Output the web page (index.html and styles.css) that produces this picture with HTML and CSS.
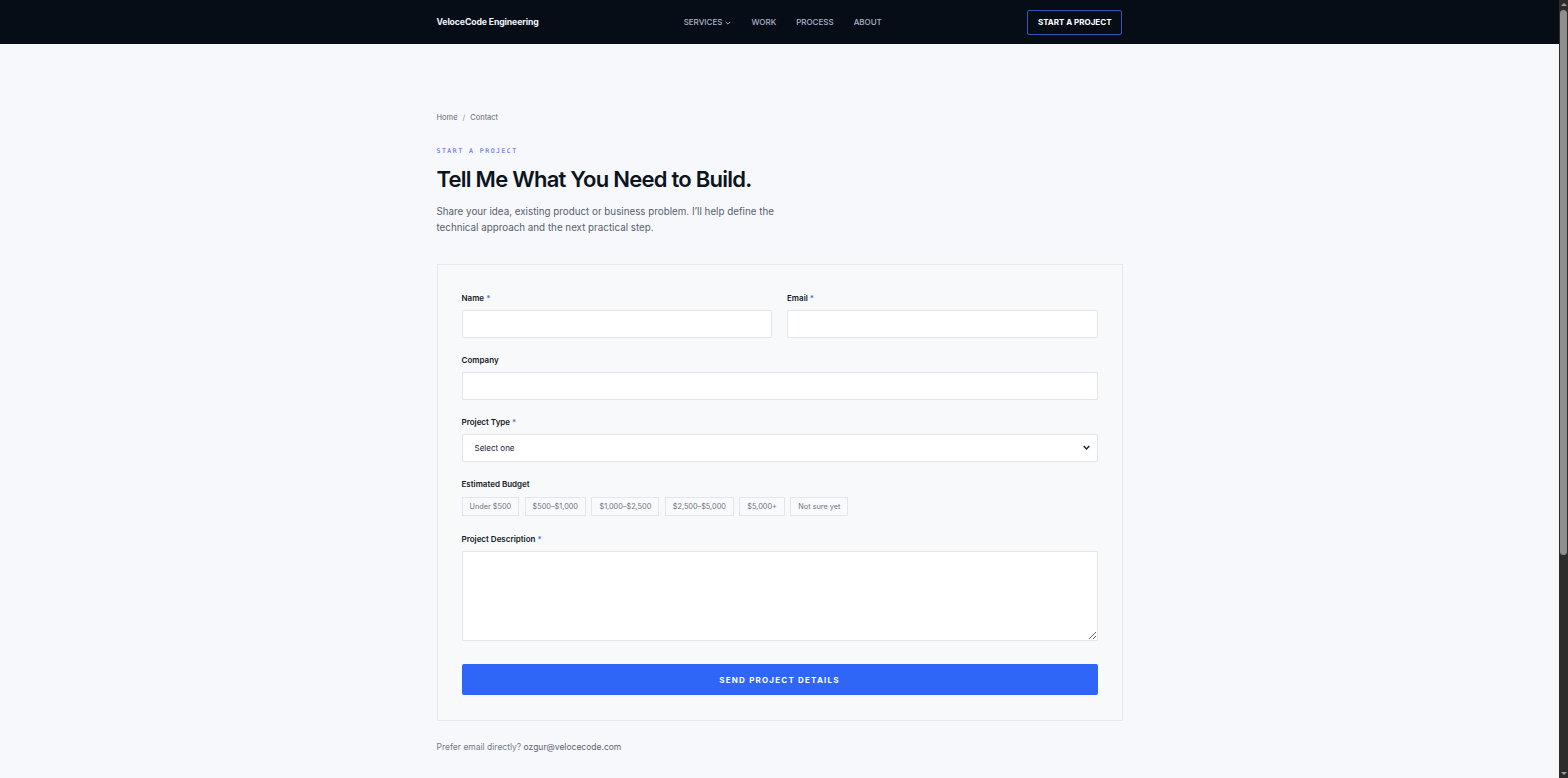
FILE: index.html
```html
<!DOCTYPE html>
<html lang="en">
<head>
<meta charset="utf-8">
<title>Contact — VeloceCode Engineering</title>
<link rel="stylesheet" href="styles.css">
</head>
<body>
<header class="topbar">
  <div class="wrap topbar-inner">
    <a class="logo" href="#">VeloceCode Engineering</a>
    <nav class="nav">
      <a href="#" class="nav-link">SERVICES
        <svg class="chev" viewBox="0 0 10 6" width="6" height="4"><path d="M1 1l4 4 4-4" fill="none" stroke="currentColor" stroke-width="1.6"/></svg>
      </a>
      <a href="#" class="nav-link">WORK</a>
      <a href="#" class="nav-link">PROCESS</a>
      <a href="#" class="nav-link">ABOUT</a>
    </nav>
    <a href="#" class="cta">START A PROJECT</a>
  </div>
</header>

<main class="wrap main">
  <div class="crumbs"><a href="#">Home</a><span class="sep">/</span><span>Contact</span></div>
  <div class="eyebrow">START A PROJECT</div>
  <h1 class="title">Tell Me What You Need to Build.</h1>
  <p class="lead">Share your idea, existing product or business problem. I’ll help define the technical approach and the next practical step.</p>

  <form class="card">
    <div class="row two">
      <div class="field">
        <label class="label">Name <span class="req">*</span></label>
        <input class="input" type="text">
      </div>
      <div class="field">
        <label class="label">Email <span class="req">*</span></label>
        <input class="input" type="email">
      </div>
    </div>
    <div class="field">
      <label class="label">Company</label>
      <input class="input" type="text">
    </div>
    <div class="field">
      <label class="label">Project Type <span class="req">*</span></label>
      <div class="select-wrap">
        <select class="input select"><option>Select one</option></select>
        <svg class="select-chev" viewBox="0 0 10 6" width="7" height="5"><path d="M1 1l4 4 4-4" fill="none" stroke="#1a1f29" stroke-width="2"/></svg>
      </div>
    </div>
    <div class="field">
      <label class="label">Estimated Budget</label>
      <div class="chips">
        <span class="chip">Under $500</span>
        <span class="chip">$500–$1,000</span>
        <span class="chip">$1,000–$2,500</span>
        <span class="chip">$2,500–$5,000</span>
        <span class="chip">$5,000+</span>
        <span class="chip">Not sure yet</span>
      </div>
    </div>
    <div class="field">
      <label class="label">Project Description <span class="req">*</span></label>
      <textarea class="input area"></textarea>
    </div>
    <button type="button" class="submit">SEND PROJECT DETAILS</button>
  </form>

  <p class="alt">Prefer email directly? <a href="#">ozgur@velocecode.com</a></p>
</main>

<div class="scrollbar" aria-hidden="true">
  <span class="sb-arrow sb-up"></span>
  <span class="sb-thumb"></span>
  <span class="sb-arrow sb-down"></span>
</div>
</body>
</html>
```

FILE: styles.css
```css
* { box-sizing: border-box; }
html, body { margin: 0; padding: 0; }
html { background: #f7f8fb; }
body {
  background: #f7f8fb;
  padding-right: 9px;
  font-family: Inter, "Liberation Sans", Arial, sans-serif;
  color: #0f1722;
}
a { color: inherit; text-decoration: none; }

.wrap { width: 686px; margin: 0 auto; }

.topbar { background: #070d17; height: 44px; }
.topbar-inner { height: 44px; display: flex; align-items: center; justify-content: space-between; }
.logo { color: #f2f4f8; font-weight: 700; font-size: 8.7px; letter-spacing: -0.12px; }
.nav { display: flex; gap: 20px; align-items: center; }
.nav-link { color: #aab4c6; font-size: 8px; font-weight: 500; display: flex; align-items: center; gap: 3px; }
.chev { margin-top: 1px; }
.cta {
  color: #ffffff; font-size: 8px; font-weight: 700;
  border: 1px solid #3556b8; border-radius: 2px; height: 25px; padding: 0 10px;
  display: flex; align-items: center;
}

.main { padding-top: 68px; padding-bottom: 24px; }
.crumbs { font-size: 7.5px; color: #5f6878; display: flex; gap: 5px; line-height: 12px; }
.crumbs .sep { color: #8a93a2; }
.eyebrow {
  margin-top: 22px; font-family: "DejaVu Sans Mono", "Liberation Mono", monospace;
  font-size: 6.5px; letter-spacing: 1.5px; color: #3c64d8; line-height: 10px;
}
.title { margin: 9px 0 0; font-size: 22px; font-weight: 600; letter-spacing: -0.75px; line-height: 28px; color: #0c1420; }
.lead { margin: 11px 0 0; width: 350px; font-size: 9.8px; line-height: 16px; color: #565f6e; }

.card {
  margin-top: 28px; border: 1px solid #e4e7ed; background: #f8f9fb;
  padding: 28px 24px 25px; display: flex; flex-direction: column; gap: 17px;
}
.row.two { display: grid; grid-template-columns: 1fr 1fr; gap: 15px; }
.field { display: flex; flex-direction: column; gap: 7px; }
.label { font-size: 8px; font-weight: 600; color: #131b27; line-height: 10px; }
.req { color: #3c64d8; font-weight: 500; }
.input {
  height: 28px; border: 1px solid #e3e6ec; background: #ffffff; border-radius: 1px;
  font-family: Inter, "Liberation Sans", Arial, sans-serif; font-size: 8px; color: #1a2230;
  width: 100%; outline: none; display: block;
}
.select-wrap { position: relative; margin-top: 0; }
.select { padding: 0 12px; -webkit-appearance: none; appearance: none; }
.select-chev { position: absolute; right: 8px; top: 11px; }
.area { height: 90px; resize: vertical; }
.chips { display: flex; gap: 5.5px; flex-wrap: wrap; margin-top: 1px; margin-bottom: 1px; }
.chip {
  font-size: 7.3px; color: #6b7382; border: 1px solid #e3e6ec; background: #f9fafc;
  height: 19px; padding: 0 7px; display: flex; align-items: center;
}
.submit {
  margin-top: 6px; height: 31px; background: #2f66f7; color: #ffffff; border: none; border-radius: 2px;
  font-family: Inter, "Liberation Sans", Arial, sans-serif; font-size: 8px; font-weight: 700; letter-spacing: 1.2px;
}
.alt { margin: 21px 0 0; font-size: 8.5px; color: #747c8a; }
.alt a { color: #5a6371; }

.scrollbar {
  position: fixed; top: 0; right: 0; width: 9px; height: 100vh;
  background: #2c2c2c; display: flex; flex-direction: column; align-items: center;
}
.sb-arrow { width: 0; height: 0; border-left: 3px solid transparent; border-right: 3px solid transparent; }
.sb-up { margin-top: 3px; border-bottom: 3px solid #9a9a9a; }
.sb-down { margin-top: auto; margin-bottom: 3px; border-top: 3px solid #9a9a9a; }
.sb-thumb { width: 7px; height: 545px; margin-top: 4px; background: #8f8f8f; border-radius: 4px; }
```
